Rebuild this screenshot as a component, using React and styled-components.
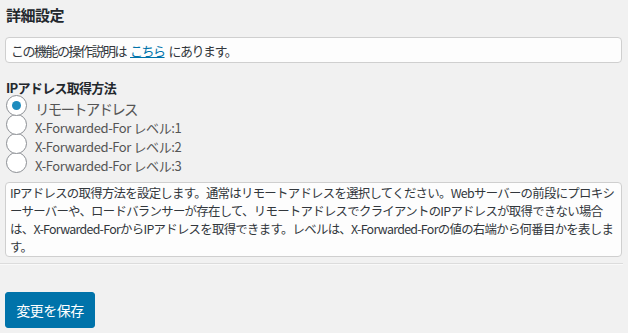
import React from "react";
import styled, { createGlobalStyle } from "styled-components";

const Global = createGlobalStyle`
  html, body { margin: 0; padding: 0; background: #f1f1f1; }
  body { font-family: "Noto Sans CJK JP", sans-serif; color: #444; }
`;

const Page = styled.div`
  padding: 0 6px 0 5px;
  width: 628px;
  box-sizing: border-box;
`;

const Title = styled.h2`
  margin: 0;
  padding: 4px 0 0 1px;
  font-size: 15px;
  line-height: 22px;
  font-weight: 700;
  letter-spacing: -0.5px;
  color: #23282d;
`;

const Box = styled.div`
  box-sizing: border-box;
  margin-top: ${(p) => p.$mt}px;
  border: 1px solid #cfcfcf;
  border-radius: 4px;
  background: #fdfdfd;
  font-size: ${(p) => p.$fs}px;
  letter-spacing: ${(p) => p.$ls}px;
  color: #32373c;
  white-space: nowrap;
`;

const Notice = styled(Box)`
  height: 26px;
  display: flex;
  align-items: center;
  padding: 0 5px;
`;

const Help = styled(Box)`
  height: 75px;
  padding: 1px 4px 0;
`;

const HelpLine = styled.div`
  height: 18px;
  line-height: 18px;
`;

const Link = styled.a`
  color: #0073aa;
  text-decoration: underline;
  margin: 0 4px;
`;

const FieldLabel = styled.div`
  margin-top: 17px;
  padding-left: 1px;
  font-size: 13px;
  line-height: 16px;
  font-weight: 700;
  letter-spacing: -0.7px;
  color: #23282d;
`;

const RadioList = styled.div`
  margin-top: -1px;
  display: flex;
  flex-direction: column;
`;

const Row = styled.label`
  height: 19px;
  display: flex;
  align-items: flex-start;
  gap: 8px;
  padding-left: 1px;
`;

const Circle = styled.span`
  flex: none;
  box-sizing: border-box;
  width: 21px;
  height: 21px;
  border: 1px solid #8c8f94;
  border-radius: 50%;
  background: #fff;
  display: flex;
  align-items: center;
  justify-content: center;
  position: relative;
  z-index: ${(p) => 10 - p.$i};
  &::after {
    content: "";
    display: ${(p) => (p.$checked ? "block" : "none")};
    width: 9px;
    height: 9px;
    border-radius: 50%;
    background: #1e8cbe;
  }
`;

const RowText = styled.span`
  margin-top: 4px;
  font-size: ${(p) => (p.$big ? 14.5 : 13)}px;
  line-height: 19px;
  letter-spacing: ${(p) => (p.$big ? -1.8 : -0.4)}px;
  color: #555;
  white-space: nowrap;
`;

const Rule = styled.hr`
  margin: 6px -1px 0 -5px;
  border: 0;
  border-top: 1px solid #dcdcdc;
  border-bottom: 1px solid #f9f9f9;
  height: 0;
`;

const SaveButton = styled.button`
  margin-top: 27px;
  width: 90px;
  height: 36px;
  border: 1px solid #0073aa;
  border-radius: 3px;
  background: #0073aa;
  color: #fff;
  font-family: inherit;
  font-size: 14px;
  letter-spacing: -0.5px;
  padding: 0;
  cursor: pointer;
`;

const options = [
  "リモートアドレス",
  "X-Forwarded-For レベル:1",
  "X-Forwarded-For レベル:2",
  "X-Forwarded-For レベル:3",
];

const helpLines = [
  "IPアドレスの取得方法を設定します。通常はリモートアドレスを選択してください。Webサーバーの前段にプロキシ",
  "ーサーバーや、ロードバランサーが存在して、リモートアドレスでクライアントのIPアドレスが取得できない場合",
  "は、X-Forwarded-ForからIPアドレスを取得できます。レベルは、X-Forwarded-Forの値の右端から何番目かを表しま",
  "す。",
];

export default function App() {
  return (
    <Page>
      <Global />
      <Title>詳細設定</Title>
      <Notice $mt={11} $fs={13} $ls={-1.5}>
        この機能の操作説明は<Link href="#">こちら</Link>にあります。
      </Notice>
      <FieldLabel>IPアドレス取得方法</FieldLabel>
      <RadioList>
        {options.map((o, i) => (
          <Row key={o}>
            <Circle $checked={i === 0} $i={i} />
            <RowText $big={i === 0}>{o}</RowText>
          </Row>
        ))}
      </RadioList>
      <Help $mt={11} $fs={12.4} $ls={-0.7}>
        {helpLines.map((l) => (
          <HelpLine key={l}>{l}</HelpLine>
        ))}
      </Help>
      <Rule />
      <SaveButton>変更を保存</SaveButton>
    </Page>
  );
}
